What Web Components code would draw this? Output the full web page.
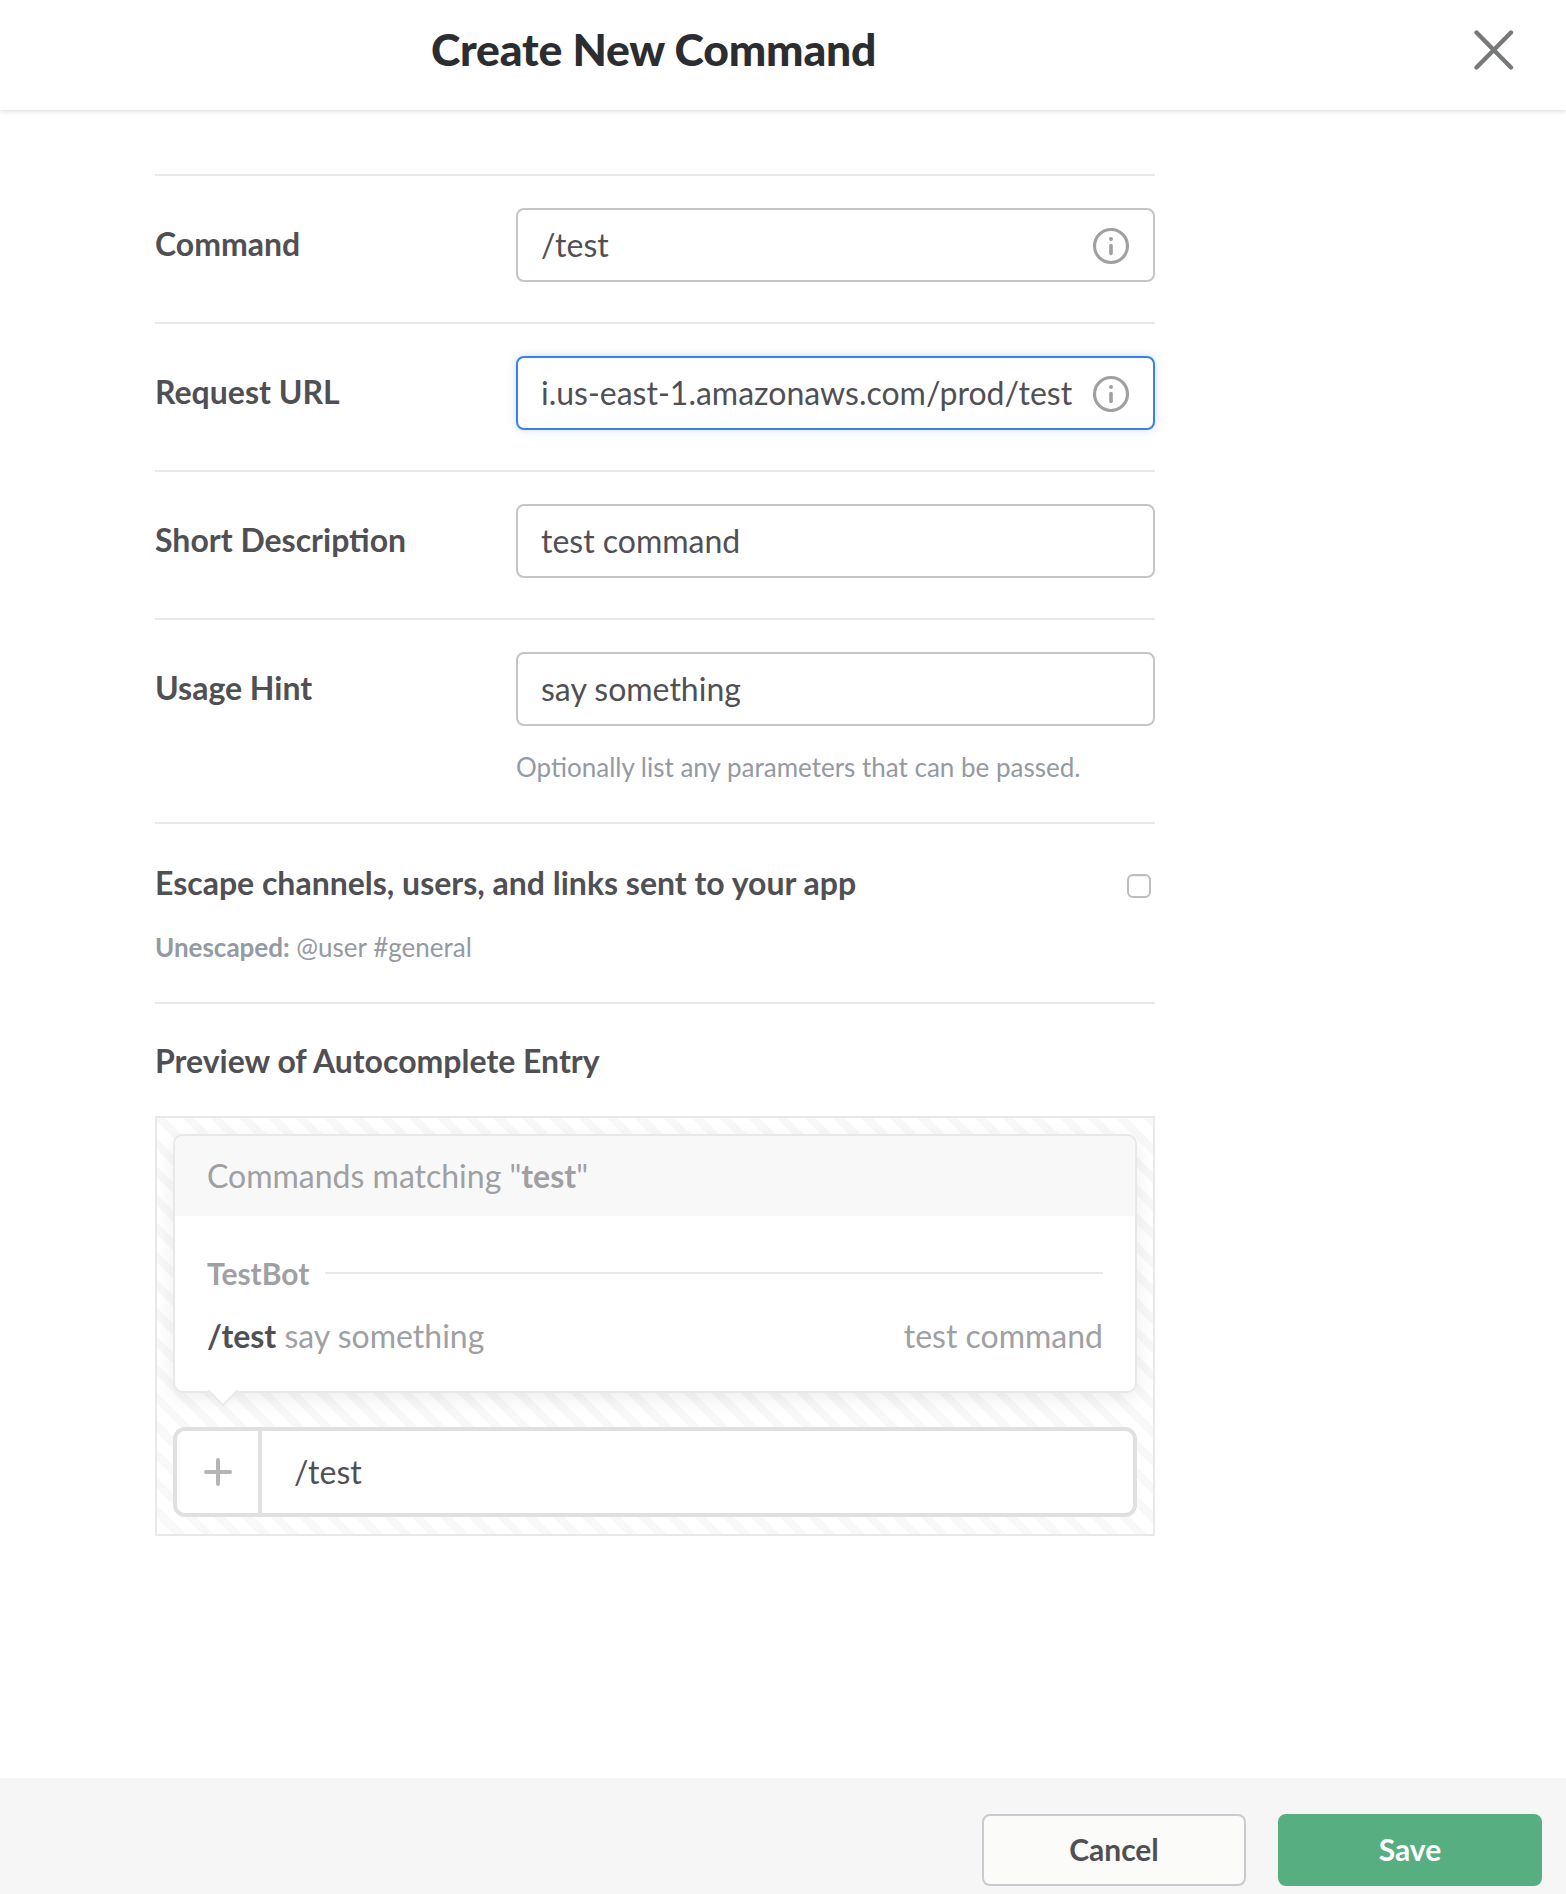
<!DOCTYPE html>
<html>
<head>
<meta charset="utf-8">
<title>Create New Command</title>
<style>
  html, body { margin: 0; padding: 0; background: #fff; }
  body { font-family: Lato, "Noto Sans", sans-serif; color: #505054; }
  command-modal { height: 1894px; }
</style>
</head>
<body>
<command-modal title="Create New Command">
  <form-row label="Command">
    <text-field info>/test</text-field>
  </form-row>
  <form-row label="Request URL">
    <text-field info focused>i.us-east-1.amazonaws.com/prod/test</text-field>
  </form-row>
  <form-row label="Short Description">
    <text-field>test command</text-field>
  </form-row>
  <form-row label="Usage Hint" hint="Optionally list any parameters that can be passed.">
    <text-field>say something</text-field>
  </form-row>
  <escape-row></escape-row>
  <autocomplete-preview></autocomplete-preview>
  <modal-button slot="footer">Cancel</modal-button>
  <modal-button slot="footer" primary>Save</modal-button>
</command-modal>

<script>
class CommandModal extends HTMLElement {
  constructor() {
    super()
    const root = this.attachShadow({ mode: 'open' })
    root.innerHTML = `
      <style>
        :host { display: flex; flex-direction: column; background: #fff; }
        header {
          height: 110px; box-sizing: border-box; padding: 0 52px 10px 431px;
          display: flex; align-items: center; justify-content: space-between;
          box-shadow: 0 1px 5px rgba(0,0,0,.16); position: relative;
        }
        h1 { margin: 0; font: 900 44.5px/1 Lato, sans-serif; color: #2c2d30; letter-spacing: -.2px; padding-bottom: 2px; }
        svg { display: block; }
        main { flex: 1; padding: 64px 0 0 155px; width: 1000px; }
        footer {
          height: 116px; box-sizing: border-box; background: #f6f6f6;
          display: flex; justify-content: flex-end; gap: 32px; padding: 36px 24px 0 0;
        }
      </style>
      <header>
        <h1>${this.getAttribute('title')}</h1>
        <svg width="40" height="40" viewBox="0 0 40 40" fill="none" stroke="#77787a" stroke-width="4.4" stroke-linecap="round">
          <path d="M2.5 2.5 37 37.5M37 2.5 2.5 37.5"/>
        </svg>
      </header>
      <main><slot></slot></main>
      <footer><slot name="footer"></slot></footer>
    `
  }
}

class FormRow extends HTMLElement {
  constructor() {
    super()
    const root = this.attachShadow({ mode: 'open' })
    const hint = this.getAttribute('hint')
    root.innerHTML = `
      <style>
        :host { display: block; border-top: 2px solid #e8e8e8; padding: 32px 0 40px; }
        .line { display: grid; grid-template-columns: 361px 1fr; align-items: center; }
        label { font: 700 32px/40px Lato, sans-serif; color: #505054; padding-bottom: 2px; }
        p { margin: 23px 0 -3px 361px; font: 400 26px/36px Lato, sans-serif; color: #949aa3; }
      </style>
      <div class="line">
        <label>${this.getAttribute('label')}</label>
        <slot></slot>
      </div>
      ${hint ? `<p>${hint}</p>` : ''}
    `
  }
}

class TextField extends HTMLElement {
  constructor() {
    super()
    const root = this.attachShadow({ mode: 'open' })
    const info = this.hasAttribute('info') ? `
      <svg width="38" height="38" viewBox="0 0 38 38" fill="none" stroke="#a0a0a2">
        <circle cx="19" cy="19" r="16.5" stroke-width="3.2"/>
        <path d="M19 18.5v8" stroke-width="3.6" stroke-linecap="round"/>
        <circle cx="19" cy="12" r="2" fill="#a0a0a2" stroke="none"/>
      </svg>` : ''
    root.innerHTML = `
      <style>
        :host {
          display: flex; align-items: center; justify-content: space-between;
          height: 74px; box-sizing: border-box; padding: 0 24px 0 23px;
          border: 2px solid #c5c5c5; border-radius: 8px; background: #fff;
          font: 400 32px/40px Lato, sans-serif; color: #505054;
        }
        :host([focused]) {
          border-color: #3b80ea; box-shadow: 0 0 8px rgba(59,128,234,.25);
        }
        svg { display: block; flex: none; margin: 2px -1px 0 0; }
      </style>
      <span><slot></slot></span>${info}
    `
  }
}

class EscapeRow extends HTMLElement {
  constructor() {
    super()
    const root = this.attachShadow({ mode: 'open' })
    root.innerHTML = `
      <style>
        :host { display: block; border-top: 2px solid #e8e8e8; height: 180px; box-sizing: border-box; padding-top: 37px; }
        .top { display: flex; justify-content: space-between; align-items: center; height: 44px; }
        b { font: 700 32px/44px Lato, sans-serif; color: #505054; }
        i { display: block; width: 24px; height: 24px; box-sizing: border-box; margin: 6px 4px 0 0;
            border: 2px solid #bdbdbd; border-radius: 6px; box-shadow: inset 0 1px 1px rgba(0,0,0,.06); }
        p { margin: 24px 0 0; font: 400 26px/36px Lato, sans-serif; color: #949aa3; }
        strong { font-weight: 700; }
      </style>
      <div class="top"><b>Escape channels, users, and links sent to your app</b><i></i></div>
      <p><strong>Unescaped:</strong> @user #general</p>
    `
  }
}

class AutocompletePreview extends HTMLElement {
  constructor() {
    super()
    const root = this.attachShadow({ mode: 'open' })
    root.innerHTML = `
      <style>
        :host { display: block; border-top: 2px solid #e8e8e8; padding-top: 35px; }
        h2 { margin: 0 0 33px; font: 700 32px/44px Lato, sans-serif; color: #505054; }
        .stage {
          box-sizing: border-box; height: 420px; padding: 16px 16px 0;
          border: 2px solid #e8e8e8;
          background: repeating-linear-gradient(45deg, #fff 0 12px, #f8f8f8 12px 20px);
        }
        .pop {
          position: relative; height: 259px; box-sizing: border-box;
          background: #fff; border: 2px solid #e8e8e8; border-radius: 10px;
          box-shadow: 0 6px 20px rgba(0,0,0,.07);
        }
        .pop::after {
          content: ""; position: absolute; left: 37px; bottom: -11px; width: 20px; height: 20px;
          background: #fff; border: solid #e8e8e8; border-width: 0 2px 2px 0;
          transform: rotate(45deg);
        }
        .head {
          height: 80px; box-sizing: border-box; padding-left: 32px; display: flex; align-items: center;
          background: #f8f8f8; border-radius: 8px 8px 0 0;
          font: 400 32px/40px Lato, sans-serif; color: #a0a0a2;
        }
        .head b { font-weight: 700; }
        .group { display: flex; align-items: center; gap: 16px; margin: 37px 32px 0; font: 700 30px/40px Lato, sans-serif; color: #a0a0a2; }
        .group::after { content: ""; flex: 1; height: 2px; background: #e8e8e8; }
        .item { display: flex; justify-content: space-between; margin: 23px 32px 0; font: 400 32px/40px Lato, sans-serif; color: #a0a0a2; }
        .item b { font-weight: 700; color: #505054; }
        .msg {
          display: flex; height: 90px; box-sizing: border-box; margin-top: 34px;
          background: #fff; border: 4px solid #e0e0e0; border-radius: 12px;
        }
        .plus { width: 81px; border-right: 4px solid #e0e0e0; display: flex; align-items: center; justify-content: center; }
        .plus svg { display: block; }
        .val { padding-left: 32px; font: 400 32px/82px Lato, sans-serif; color: #505054; }
      </style>
      <h2>Preview of Autocomplete Entry</h2>
      <div class="stage">
        <div class="pop">
          <div class="head"><span>Commands matching "<b>test</b>"</span></div>
          <div class="group">TestBot</div>
          <div class="item"><span><b>/test</b> say something</span><span>test command</span></div>
        </div>
        <div class="msg">
          <div class="plus">
            <svg width="28" height="28" viewBox="0 0 28 28" stroke="#b5b5b7" stroke-width="4" stroke-linecap="round"><path d="M14 2v24M2 14h24"/></svg>
          </div>
          <div class="val">/test</div>
        </div>
      </div>
    `
  }
}

class ModalButton extends HTMLElement {
  constructor() {
    super()
    const root = this.attachShadow({ mode: 'open' })
    root.innerHTML = `
      <style>
        :host {
          display: flex; align-items: center; justify-content: center;
          width: 264px; height: 72px; box-sizing: border-box; padding-bottom: 2px;
          border: 2px solid #c8cacc; border-radius: 8px; background: #fbfbfa;
          font: 700 30px/1 Lato, sans-serif; color: #505054;
        }
        :host([primary]) { background: #57ae80; border-color: #57ae80; color: #fff; }
      </style>
      <slot></slot>
    `
  }
}

customElements.define('command-modal', CommandModal)
customElements.define('form-row', FormRow)
customElements.define('text-field', TextField)
customElements.define('escape-row', EscapeRow)
customElements.define('autocomplete-preview', AutocompletePreview)
customElements.define('modal-button', ModalButton)
</script>
</body>
</html>
